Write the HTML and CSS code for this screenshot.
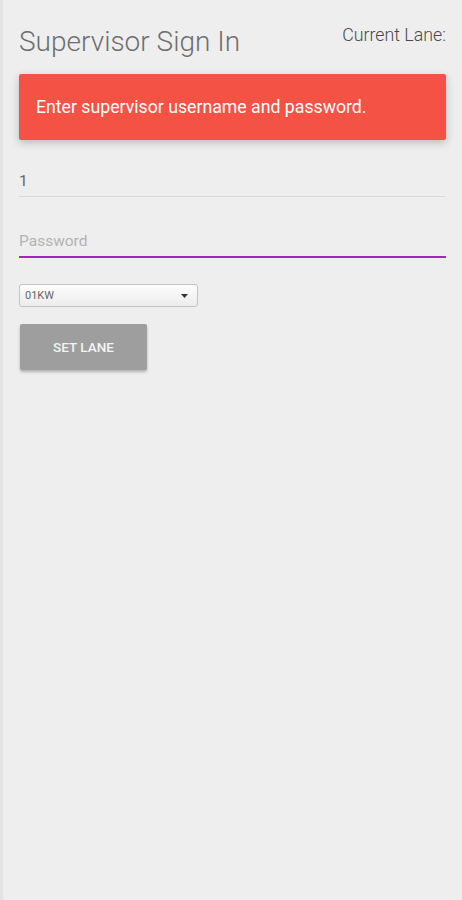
FILE: index.html
```html
<!DOCTYPE html>
<html>
<head>
    <title>Supervisor Sign In</title>
    <link rel="stylesheet" href="styles.css">
</head>
<body>
    <div class="page">
        <div class="header">
            <h1 class="title">Supervisor Sign In</h1>
            <div class="lane">Current Lane:</div>
        </div>

        <div class="alert">Enter supervisor username and password.</div>

        <form class="signin">
            <div class="field">
                <input type="text" class="field-input" value="1">
            </div>
            <div class="field field-focus">
                <input type="password" class="field-input" placeholder="Password">
            </div>
            <div class="select">
                <span class="select-value">01KW</span>
                <svg class="select-arrow" width="7" height="4" viewBox="0 0 7 4"><path d="M0 0 L7 0 L3.5 4 Z" fill="#333"/></svg>
            </div>
            <button type="button" class="btn">SET LANE</button>
        </form>
    </div>
</body>
</html>
```

FILE: styles.css
```css
html, body { height: 100%; }
body { margin: 0; background: #eeeeee; border-left: 3px solid #e4e4e4; font-family: Roboto, "Liberation Sans", sans-serif; box-sizing: border-box; }
.page { padding: 26px 16px 0 16px; }

.header { display: flex; justify-content: space-between; align-items: flex-start; }
.title { margin: 0; font-size: 28px; line-height: 32px; font-weight: 300; color: #6e6e6e; }
.lane { font-size: 17.8px; line-height: 20px; font-weight: 300; color: #4a4a4a; margin-top: -1px; }

.alert { margin-top: 16px; height: 66px; box-sizing: border-box; padding: 0 17px; display: flex; align-items: center; background: #f55246; color: #fff; font-size: 17.7px; border-radius: 2px; box-shadow: 0 3px 8px rgba(0,0,0,0.22); }

.signin { margin: 0; }
.field { border-bottom: 1px solid #dadada; margin-top: 26px; }
.field-input { display: block; width: 100%; box-sizing: border-box; border: none; background: transparent; outline: none; padding: 0; height: 30px; font-family: inherit; font-size: 15.5px; color: #666; }
.field-input::placeholder { color: #b3b3b3; }
.field-focus { border-bottom: 2px solid #a225c2; margin-top: 29px; }

.select { margin-top: 26px; width: 179px; height: 23px; box-sizing: border-box; border: 1px solid #c4c4c4; border-radius: 3px; background: linear-gradient(#fdfdfd, #ececec); display: flex; align-items: center; justify-content: space-between; padding: 0 9px 0 5px; }
.select-value { font-size: 11px; color: #666; }

.btn { display: block; margin: 17px 0 0 1px; width: 127px; height: 46px; border: none; border-radius: 2px; background: #9e9e9e; color: #f4f4f4; font-family: inherit; font-size: 13.5px; font-weight: 500; box-shadow: 0 2px 3px rgba(0,0,0,0.25); }
```
